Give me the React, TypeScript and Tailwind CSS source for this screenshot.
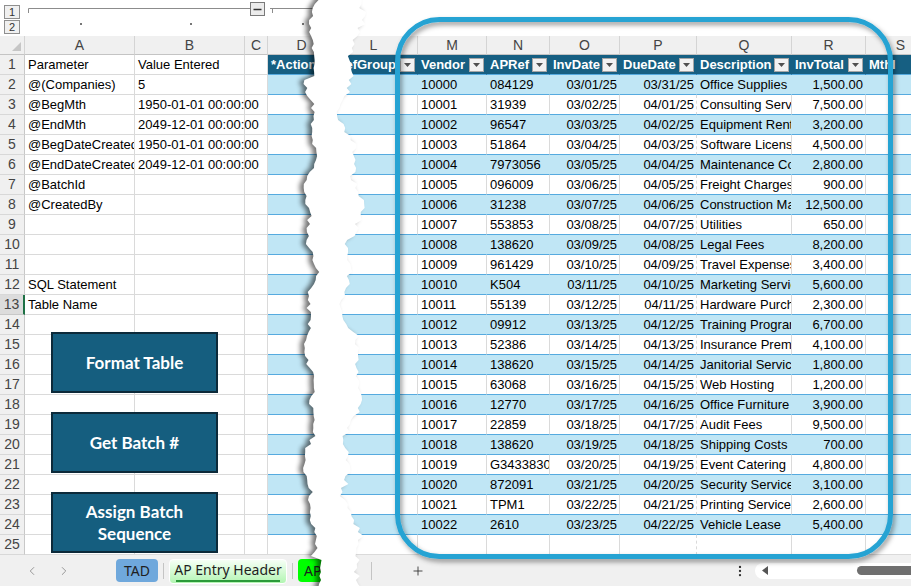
import React from 'react';
import { ChevronLeft, ChevronRight, Plus, EllipsisVertical } from 'lucide-react';

const leftData: [string, string][] = [
  ['Parameter', 'Value Entered'],
  ['@(Companies)', '5'],
  ['@BegMth', '1950-01-01 00:00:00'],
  ['@EndMth', '2049-12-01 00:00:00'],
  ['@BegDateCreated', '1950-01-01 00:00:00'],
  ['@EndDateCreated', '2049-12-01 00:00:00'],
  ['@BatchId', ''],
  ['@CreatedBy', ''],
  ['', ''],
  ['', ''],
  ['', ''],
  ['SQL Statement', ''],
  ['Table Name', ''],
];

const invoices: string[][] = [
  ['10000', '084129', '03/01/25', '03/31/25', 'Office Supplies', '1,500.00'],
  ['10001', '31939', '03/02/25', '04/01/25', 'Consulting Services', '7,500.00'],
  ['10002', '96547', '03/03/25', '04/02/25', 'Equipment Rental', '3,200.00'],
  ['10003', '51864', '03/04/25', '04/03/25', 'Software License', '4,500.00'],
  ['10004', '7973056', '03/05/25', '04/04/25', 'Maintenance Contract', '2,800.00'],
  ['10005', '096009', '03/06/25', '04/05/25', 'Freight Charges', '900.00'],
  ['10006', '31238', '03/07/25', '04/06/25', 'Construction Materials', '12,500.00'],
  ['10007', '553853', '03/08/25', '04/07/25', 'Utilities', '650.00'],
  ['10008', '138620', '03/09/25', '04/08/25', 'Legal Fees', '8,200.00'],
  ['10009', '961429', '03/10/25', '04/09/25', 'Travel Expenses', '3,400.00'],
  ['10010', 'K504', '03/11/25', '04/10/25', 'Marketing Services', '5,600.00'],
  ['10011', '55139', '03/12/25', '04/11/25', 'Hardware Purchase', '2,300.00'],
  ['10012', '09912', '03/13/25', '04/12/25', 'Training Program', '6,700.00'],
  ['10013', '52386', '03/14/25', '04/13/25', 'Insurance Premium', '4,100.00'],
  ['10014', '138620', '03/15/25', '04/14/25', 'Janitorial Services', '1,800.00'],
  ['10015', '63068', '03/16/25', '04/15/25', 'Web Hosting', '1,200.00'],
  ['10016', '12770', '03/17/25', '04/16/25', 'Office Furniture', '3,900.00'],
  ['10017', '22859', '03/18/25', '04/17/25', 'Audit Fees', '9,500.00'],
  ['10018', '138620', '03/19/25', '04/18/25', 'Shipping Costs', '700.00'],
  ['10019', 'G3433830', '03/20/25', '04/19/25', 'Event Catering', '4,800.00'],
  ['10020', '872091', '03/21/25', '04/20/25', 'Security Services', '3,100.00'],
  ['10021', 'TPM1', '03/22/25', '04/21/25', 'Printing Services', '2,600.00'],
  ['10022', '2610', '03/23/25', '04/22/25', 'Vehicle Lease', '5,400.00'],
];

const rows = Array.from({ length: 25 }, (_, i) => i + 1);

const colHead =
  'h-[19px] bg-[#f0f0f0] border-r border-b border-r-[#d4d4d4] border-b-[#c4c4c4] text-center text-[14px] leading-[18px] text-[#444]';
const cell = 'h-[20px] whitespace-nowrap border-r border-b px-[3px] text-[13px] leading-[19px] text-black';
const plain = 'bg-white border-r-[#dadada] border-b-[#dadada]';
const bandBlue = 'bg-[#c0e6f5] border-r-[#c0e6f5] border-b-[#55aadf]';
const bandWhite = 'bg-white border-r-[#dadada] border-b-[#55aadf]';
const headBlue = 'bg-[#165f82] border-r-[#165f82] border-b-[#55aadf] font-bold text-white';

const Filter = ({ push = true }: { push?: boolean }) => (
  <span
    className={`${push ? 'ml-auto' : ''} mr-[2px] flex h-[14px] w-[15px] shrink-0 items-center justify-center border border-[#a6a6a6] bg-[#f2f2f2]`}
  >
    <svg width="7" height="4" viewBox="0 0 7 4">
      <path d="M0 0h7L3.5 4z" fill="#505050" />
    </svg>
  </span>
);

const tearPath = () => {
  let s = 11;
  const rnd = () => {
    s = (s * 9301 + 49297) % 233280;
    return s / 233280;
  };
  const left: string[] = [];
  const right: string[] = [];
  for (let y = -4; y <= 592; y += 4) {
    let x = 310 + 4 * Math.sin(y / 21 + 1.2) + 3 * Math.sin(y / 8.7 + 2) + (rnd() - 0.5) * 5;
    if (y > 48 && y < 80) x = Math.max(x, 313 + rnd() * 2);
    if (y > 556) x = Math.max(x, 318 + rnd() * 4);
    left.push(`${x.toFixed(1)},${y}`);
  }
  for (let y = 592; y >= -4; y -= 4) {
    const x = 352 + 8 * Math.sin(y / 29 + 1) + 4 * Math.sin(y / 10.3) + (rnd() - 0.5) * 7;
    right.push(`${x.toFixed(1)},${y}`);
  }
  return 'M' + left.join(' L') + ' L' + right.join(' L') + ' Z';
};

const OutlineBar = () => (
  <div className="relative flex h-[36px] bg-white">
    <div className="ml-[4px] mt-[5px] flex flex-col">
      <span className="flex h-[14px] w-[16px] items-center justify-center border border-[#8f8f8f] bg-[#f0f0f0] text-[11px] leading-none text-[#333]">
        1
      </span>
      <span className="mt-px flex h-[14px] w-[16px] items-center justify-center border border-[#8f8f8f] bg-[#f0f0f0] text-[11px] leading-none text-[#333]">
        2
      </span>
    </div>
    <svg className="absolute left-0 top-0" width="330" height="36">
      <path d="M28.5 13V8.5H250M270 8.5H330M272.5 8.5V13" stroke="#8c8c8c" fill="none" />
      <rect x="250.5" y="2.5" width="14" height="13" fill="#ececec" stroke="#7a7a7a" />
      <path d="M253.5 9.5h8" stroke="#333" strokeWidth="1.5" />
      <rect x="80" y="23" width="2" height="2" fill="#777" />
      <rect x="190" y="23" width="2" height="2" fill="#777" />
      <rect x="302" y="23" width="2" height="2" fill="#777" />
    </svg>
  </div>
);

const MacroButton = ({ top, children }: { top: string; children: React.ReactNode }) => (
  <div
    className={`absolute left-[51px] ${top} flex h-[61px] w-[167px] items-center justify-center border-2 border-[#0c2a3a] bg-[#155e7f] text-center text-[17px] font-bold leading-[22px] text-white`}
    style={{ fontFamily: 'Lato, "Open Sans", sans-serif' }}
  >
    {children}
  </div>
);

const LeftSheet = () => (
  <div className="relative w-[322px] shrink-0 overflow-hidden">
    <OutlineBar />
    <div className="grid w-[336px] grid-cols-[25px_110px_110px_23px_68px]">
      <div className={`${colHead} relative`}>
        <svg className="absolute bottom-[3px] right-[3px]" width="9" height="9">
          <path d="M9 0V9H0z" fill="#c6c6c6" />
        </svg>
      </div>
      {['A', 'B', 'C', 'D'].map((l) => (
        <div key={l} className={colHead}>
          {l}
        </div>
      ))}
      {rows.map((r) => {
        const [a, b] = leftData[r - 1] ?? ['', ''];
        const inTable = r <= 24;
        const dClass = r === 1 ? headBlue : !inTable ? plain : r % 2 === 0 ? bandBlue : bandWhite;
        return (
          <React.Fragment key={r}>
            <div
              className={`h-[20px] border-b border-r text-center text-[14px] leading-[19px] text-[#444] ${
                r === 13
                  ? 'border-b-[#c8c8c8] border-r-2 border-r-[#1e7145] bg-[#dcdcdc]'
                  : 'border-b-[#d8d8d8] border-r-[#c8c8c8] bg-[#f0f0f0]'
              }`}
            >
              {r}
            </div>
            <div className={`${cell} ${plain} overflow-hidden`}>{a}</div>
            <div className={`${cell} ${plain} overflow-visible`}>{b}</div>
            <div
              className={`${cell} border-r-[#dadada] border-b-[#dadada] bg-transparent ${inTable ? 'border-r-[#55aadf]' : ''}`}
            />
            <div className={`${cell} ${dClass} overflow-hidden`}>{r === 1 ? '*Action' : ''}</div>
          </React.Fragment>
        );
      })}
    </div>
    <MacroButton top="top-[332px]">Format Table</MacroButton>
    <MacroButton top="top-[412px]">Get Batch #</MacroButton>
    <MacroButton top="top-[492px]">
      Assign Batch
      <br />
      Sequence
    </MacroButton>
  </div>
);

const heads = ['RefGroup', 'Vendor', 'APRef', 'InvDate', 'DueDate', 'Description', 'InvTotal', 'Mthl'];
const letters = ['L', 'M', 'N', 'O', 'P', 'Q', 'R', 'S'];
const dashed = 'border-r-[#8c8c8c] [border-right-style:dashed]';

const RightSheet = () => (
  <div className="flex-1 overflow-hidden">
    <div className="h-[36px] bg-white" />
    <div className="grid w-[614px] grid-cols-[96px_69px_63px_70px_77px_95px_74px_70px]">
      {letters.map((l) => (
        <div key={l} className={`${colHead} ${l === 'L' ? 'pl-[8px]' : ''}`}>
          {l}
        </div>
      ))}
      {rows.map((r) =>
        letters.map((l, c) => {
          const isP = c === 4;
          if (r === 1) {
            return (
              <div
                key={l + r}
                className={`${cell} ${headBlue} ${isP ? 'border-r-[#9fb9c8] [border-right-style:dashed]' : ''} flex items-center overflow-hidden ${
                  c === 0 ? 'justify-end' : ''
                } pr-0`}
              >
                <span className={c === 0 ? 'mr-[4px]' : ''}>{heads[c]}</span>
                {c < 7 && <Filter push={c !== 0} />}
              </div>
            );
          }
          const data = invoices[r - 2];
          const band = !data ? plain : r % 2 === 0 ? bandBlue : bandWhite;
          const text = data && c >= 1 && c <= 6 ? data[c - 1] : '';
          const right = c === 3 || c === 4 || c === 6;
          return (
            <div
              key={l + r}
              className={`${cell} ${band} overflow-hidden ${isP ? dashed : ''} ${right ? 'pr-[2px] text-right' : ''}`}
            >
              {text}
            </div>
          );
        })
      )}
    </div>
  </div>
);

const TabBar = () => (
  <div className="flex h-[31px] bg-[#f0f0f0] text-[#1f1f1f]" style={{ fontFamily: '"Noto Sans", "Open Sans", sans-serif' }}>
    <div className="flex w-[322px] shrink-0 overflow-hidden">
      <div className="flex h-full w-[116px] shrink-0 items-center gap-[18px] pl-[25px] text-[#8a8a8a]">
        <ChevronLeft size={14} strokeWidth={1.5} />
        <ChevronRight size={14} strokeWidth={1.5} />
      </div>
      <div className="mt-[4px] flex h-[23px] w-[42px] shrink-0 items-center justify-center rounded-[4px] bg-[#6fa8dc] text-[14px]">
        TAD
      </div>
      <div className="mx-[5px] mt-[8px] h-[16px] w-px shrink-0 bg-[#c4c4c4]" />
      <div className="mt-[4px] flex h-[25px] w-[118px] shrink-0 flex-col items-center rounded-[4px] border border-white bg-gradient-to-b from-[#f6fff6] to-[#b2f5b2] pt-[1px]">
        <span className="text-[14px] leading-[17px]">AP Entry Header</span>
        <span className="mt-[2px] h-[2px] w-[104px] bg-[#2c9a3a]" />
      </div>
      <div className="mx-[5px] mt-[8px] h-[16px] w-px shrink-0 bg-[#c4c4c4]" />
      <div className="mt-[4px] flex h-[23px] w-[110px] shrink-0 items-center whitespace-nowrap rounded-[4px] bg-[#00ff00] pl-[6px] text-[14px]">
        AP Entry Detail
      </div>
    </div>
    <div className="flex flex-1 items-center">
      <div className="ml-[49px] h-[18px] w-px bg-[#c4c4c4]" />
      <Plus className="ml-[39px] text-[#333]" size={14} strokeWidth={1.5} />
      <EllipsisVertical className="ml-[308px] text-[#333]" size={14} strokeWidth={2} />
      <div className="ml-[8px] flex h-[16px] flex-1 items-center rounded-l-full bg-white">
        <svg className="ml-[7px]" width="6" height="9" viewBox="0 0 6 9">
          <path d="M6 0V9L0 4.5z" fill="#555" />
        </svg>
        <div className="ml-auto h-[9px] w-[54px] rounded-l-full bg-[#6f6f6f]" />
      </div>
    </div>
  </div>
);

export default function App() {
  const tear = tearPath();
  return (
    <div
      className="relative h-[586px] w-[911px] overflow-hidden bg-white"
      style={{ fontFamily: '"Liberation Sans", Arial, sans-serif' }}
    >
      <div className="flex">
        <LeftSheet />
        <RightSheet />
      </div>
      <TabBar />
      <svg className="pointer-events-none absolute left-0 top-0" width="911" height="586">
        <defs>
          <filter id="tearShadow" x="-50%" y="-5%" width="200%" height="110%">
            <feGaussianBlur stdDeviation="2.5" />
          </filter>
          <filter id="rectShadow" x="-10%" y="-10%" width="120%" height="120%">
            <feDropShadow dx="2" dy="3" stdDeviation="2.5" floodColor="#000" floodOpacity="0.4" />
          </filter>
        </defs>
        <path d={tear} fill="#000" opacity="0.55" transform="translate(-4 0)" filter="url(#tearShadow)" />
        <path d={tear} fill="#fff" />
        <rect
          x="397.5"
          y="19.5"
          width="493"
          height="537"
          rx="42"
          fill="none"
          stroke="#25a3d3"
          strokeWidth="5"
          filter="url(#rectShadow)"
        />
      </svg>
    </div>
  );
}
